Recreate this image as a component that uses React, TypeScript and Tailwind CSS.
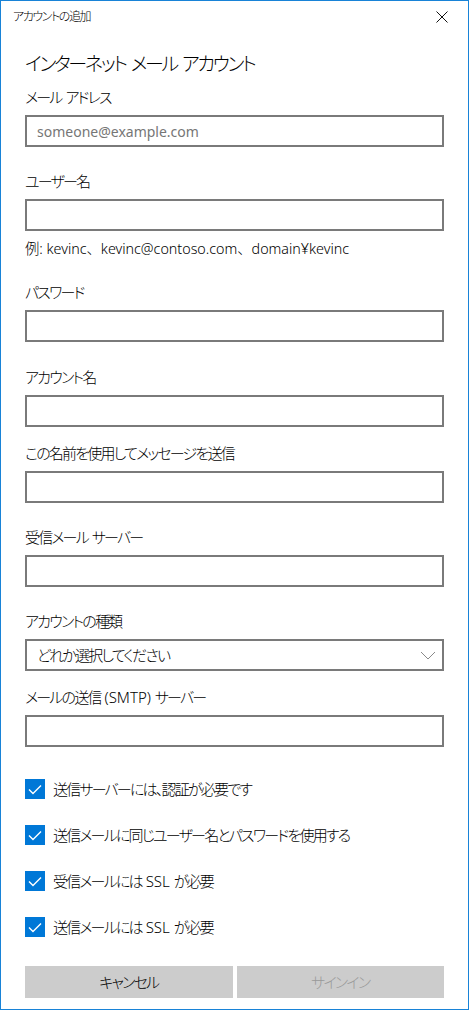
import React from "react";

const font =
  "font-['Noto_Sans','Noto_Sans_CJK_JP',sans-serif] [font-feature-settings:'palt']";

// Latin runs keep normal spacing; only the kana/kanji are tightened
function Tight({ text }: { text: string }) {
  return (
    <>
      {text.split(/([ -~]+)/).map((part, i) =>
        /^[ -~]+$/.test(part) ? (
          <span key={i} className="tracking-normal">
            {part}
          </span>
        ) : (
          part
        ),
      )}
    </>
  );
}

function Label({ text, className }: { text: string; className?: string }) {
  return (
    <div
      className={`text-[15px] leading-[20px] font-light tracking-[-0.12em] text-black ${className ?? ""}`}
    >
      <Tight text={text} />
    </div>
  );
}

function TextBox({ placeholder }: { placeholder?: string }) {
  return (
    <div className="mt-2 flex h-[32px] items-center border-2 border-[#7a7a7a] bg-white px-[10px] text-[14px] text-[#767676]">
      {placeholder}
    </div>
  );
}

function Check({ text }: { text: string }) {
  return (
    <div className="flex h-[20px] items-center gap-2">
      <span className="flex h-[20px] w-[20px] items-center justify-center bg-[#0078d7]">
        <svg width="14" height="11" viewBox="0 0 14 11" fill="none">
          <path d="M1 5.5 L5 9.5 L13 1.5" stroke="white" strokeWidth="1.4" />
        </svg>
      </span>
      <span className="text-[15px] leading-[20px] font-light tracking-[-0.12em] text-black">
        <Tight text={text} />
      </span>
    </div>
  );
}

export default function App() {
  return (
    <div
      className={`flex h-[1010px] w-[469px] flex-col border border-[#1883d7] bg-white ${font}`}
    >
      <div className="flex h-[32px] items-center justify-between pl-[12px] pr-[20px]">
        <span className="text-[12px] font-light tracking-[-0.12em] text-black">
          アカウントの追加
        </span>
        <svg width="12" height="12" viewBox="0 0 12 12">
          <path d="M0.5 0.5 L11.5 11.5 M11.5 0.5 L0.5 11.5" stroke="#111" strokeWidth="1" />
        </svg>
      </div>

      <div className="flex flex-col px-6">
        <h1 className="mt-[17px] text-[19px] leading-[28px] font-light tracking-[-0.12em] text-black">
          <Tight text="インターネット メール アカウント" />
        </h1>

        <Label text="メール アドレス" className="mt-[9px]" />
        <TextBox placeholder="someone@example.com" />

        <Label text="ユーザー名" className="mt-6" />
        <TextBox />
        <div className="mt-2 text-[14.3px] leading-[20px] font-light text-black [font-feature-settings:normal]">
          例: kevinc、kevinc@contoso.com、domain¥kevinc
        </div>

        <Label text="パスワード" className="mt-[23px]" />
        <TextBox />

        <Label text="アカウント名" className="mt-[25px]" />
        <TextBox />

        <Label text="この名前を使用してメッセージを送信" className="mt-4" />
        <TextBox />

        <Label text="受信メール サーバー" className="mt-6" />
        <TextBox />

        <Label text="アカウントの種類" className="mt-6" />
        <div className="mt-2 flex h-[32px] items-center justify-between border-2 border-[#7a7a7a] bg-white pl-[10px] pr-[6px] text-[15px] font-light tracking-[-0.12em] text-black">
          <span>どれか選択してください</span>
          <svg width="16" height="9" viewBox="0 0 16 9" fill="none">
            <path d="M1 1 L8 8 L15 1" stroke="#8a8a8a" strokeWidth="1" />
          </svg>
        </div>

        <Label text="メールの送信 (SMTP) サーバー" className="mt-4" />
        <TextBox />

        <div className="mt-8 flex flex-col gap-[26px]">
          <Check text="送信サーバーには、認証が必要です" />
          <Check text="送信メールに同じユーザー名とパスワードを使用する" />
          <Check text="受信メールには SSL が必要" />
          <Check text="送信メールには SSL が必要" />
        </div>

        <div className="mt-[29px] grid grid-cols-2 gap-1">
          <button className="h-[32px] bg-[#cccccc] text-[15px] font-light tracking-[-0.12em] text-black">
            キャンセル
          </button>
          <button className="h-[32px] bg-[#cccccc] text-[15px] font-light tracking-[-0.12em] text-[#999999]">
            サインイン
          </button>
        </div>
      </div>
    </div>
  );
}
